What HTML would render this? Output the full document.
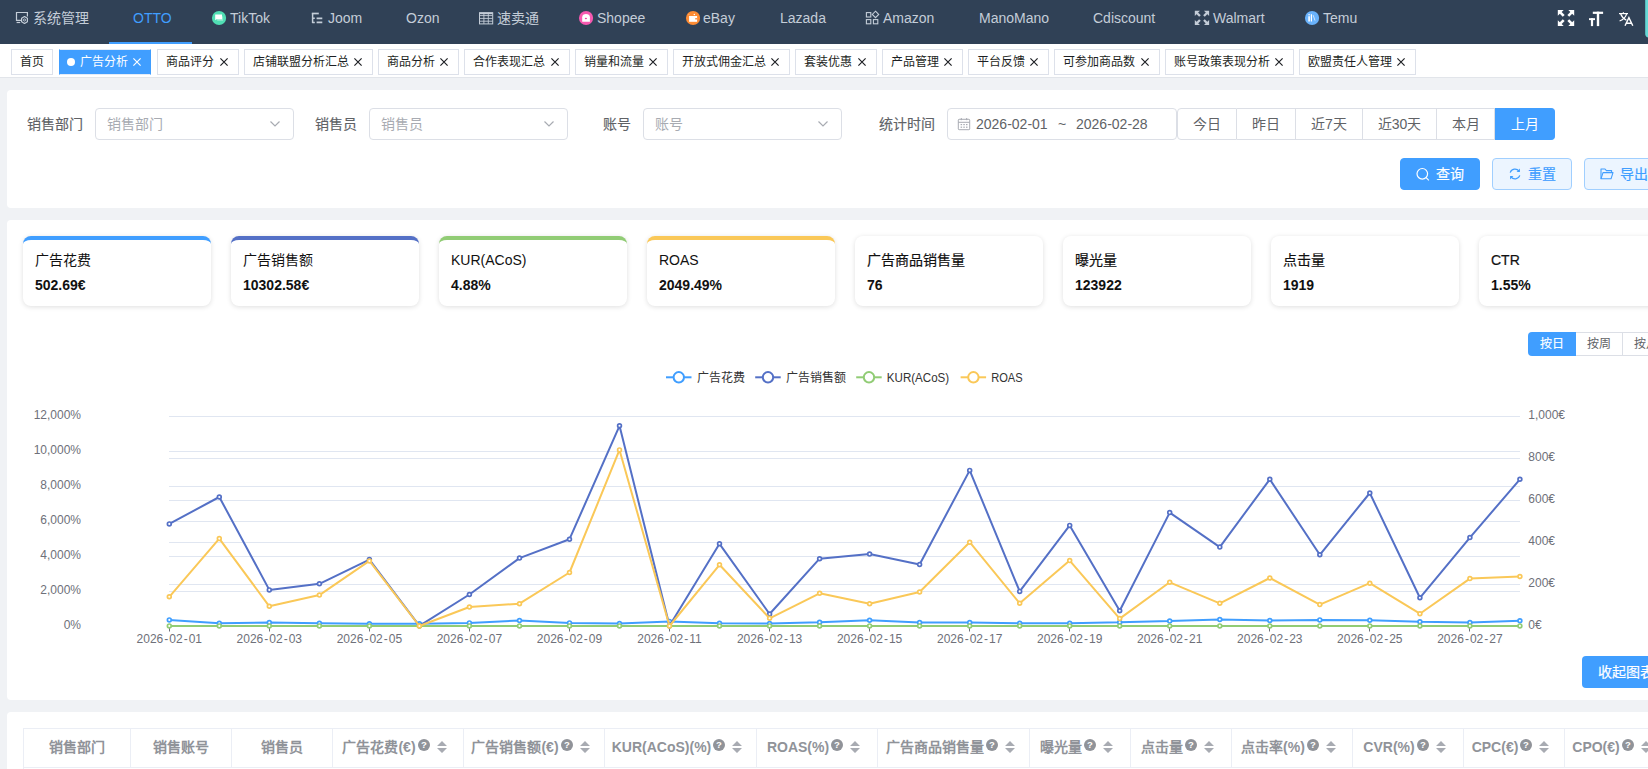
<!DOCTYPE html><html lang="zh-CN"><head><meta charset="utf-8"><title>ad</title><style>
*{box-sizing:border-box;margin:0;padding:0}
html,body{width:1648px;height:769px;overflow:hidden;background:#f0f2f5;font-family:"Liberation Sans",sans-serif;}
body{position:relative;color:#606266;font-size:14px}
.abs{position:absolute}
.nav{position:absolute;left:0;top:0;width:1648px;height:44px;background:#304156}
.nav .t{position:absolute;top:0;height:36px;line-height:36px;font-size:14px;color:#c4cdd8;white-space:nowrap}
.nav .ic{position:absolute}
.tabs{position:absolute;left:0;top:44px;width:1648px;height:34px;background:#fff;border-bottom:1px solid #e2e5ea}
.tag{position:absolute;top:5px;height:26px;line-height:24px;border:1px solid #dde1ea;background:#fff;color:#1d1f23;font-size:12px;padding-left:8px;white-space:nowrap;overflow:hidden}
.tag.act{background:#409eff;border-color:#e4ecf7 #409eff;color:#fff;background-clip:padding-box;padding-left:7px}
.tag .x{position:absolute;right:10px;top:8px;width:8px;height:8px}
.tag.act .x{right:9px}
.panel{position:absolute;left:7px;width:1660px;background:#fff;border-radius:4px}
.lbl{position:absolute;-webkit-text-stroke:0.15px;font-size:14px;color:#606266;height:32px;line-height:32px;white-space:nowrap}
.sel{position:absolute;height:32px;border:1px solid #dcdfe6;border-radius:4px;background:#fff;font-size:14px;color:#a8abb2;line-height:30px;padding-left:11px;white-space:nowrap}
.bg{position:absolute;top:108px;height:32px;border:1px solid #dcdfe6;border-left:none;background:#fff;font-size:14px;color:#606266;line-height:30px;text-align:center;white-space:nowrap}
.btn{position:absolute;height:32px;border-radius:4px;font-size:14px;line-height:30px;white-space:nowrap;-webkit-text-stroke:0.2px}
.card{position:absolute;top:236px;width:188px;height:70px;background:#fff;border-radius:8px;border-top:4px solid transparent;box-shadow:0 1px 5px rgba(0,0,0,.13)}
.card .ct{position:absolute;left:12px;top:10px;font-size:14px;color:#111;line-height:20px;white-space:nowrap}
.card .cv{position:absolute;left:12px;top:35px;font-size:14px;font-weight:bold;color:#111;line-height:20px;white-space:nowrap}
.th{position:absolute;top:729px;height:39px;border-right:1px solid #ebeef5;border-bottom:1px solid #ebeef5;font-size:14px;font-weight:bold;color:#909399;line-height:38px;white-space:nowrap;overflow:hidden;display:flex;align-items:center;justify-content:center}
</style></head><body>
<div class="nav">
<div class="t" style="left:33px;color:#c4cdd8">系统管理</div>
<div class="t" style="left:133px;color:#409eff">OTTO</div>
<div class="t" style="left:230px;color:#c4cdd8">TikTok</div>
<div class="t" style="left:328px;color:#c4cdd8">Joom</div>
<div class="t" style="left:406px;color:#c4cdd8">Ozon</div>
<div class="t" style="left:497px;color:#c4cdd8">速卖通</div>
<div class="t" style="left:597px;color:#c4cdd8">Shopee</div>
<div class="t" style="left:703px;color:#c4cdd8">eBay</div>
<div class="t" style="left:780px;color:#c4cdd8">Lazada</div>
<div class="t" style="left:883px;color:#c4cdd8">Amazon</div>
<div class="t" style="left:979px;color:#c4cdd8">ManoMano</div>
<div class="t" style="left:1093px;color:#c4cdd8">Cdiscount</div>
<div class="t" style="left:1213px;color:#c4cdd8">Walmart</div>
<div class="t" style="left:1323px;color:#c4cdd8">Temu</div>
<div class="abs" style="left:109px;top:42px;width:83px;height:2px;background:#409eff"></div>
<svg class="abs" style="left:0;top:0" width="1648" height="44" viewBox="0 0 1648 44"><g fill="none" stroke="#c4cdd8" stroke-width="1.2"><path d="M21 20.4 H16.5 V12.5 H27.4 V16.6"/><path d="M16.6 22.5 H20.2"/><path d="M24.5 16.6 L27.4 18.3 V21.7 L24.5 23.4 L21.6 21.7 V18.3 Z" fill="#304156" stroke-linejoin="round"/><circle cx="24.5" cy="20" r="1.1" stroke-width="0.9"/></g><circle cx="219.05" cy="18" r="7.1" fill="#50deb4"/><path d="M217.2 16.4 h5.9 v4.5 h-5.9 z" fill="#fff" opacity="0.35"/><path d="M215.2 14.6 h6.8 v4.7 h-5.4 l-1.4 0.9 z" fill="#fff"/><g fill="none" stroke="#c4cdd8" stroke-width="1.7"><path d="M311.8 13.5 H318.8"/><path d="M312.6 13.5 V23.1" stroke-width="1.5"/><path d="M312.5 18.3 H314.8 M312.5 22.4 H314.8" stroke-width="1.5"/><path d="M316.6 18.3 H322.3 M316.6 22.4 H322.3"/></g><g fill="none" stroke="#c4cdd8" stroke-width="1"><rect x="479.5" y="12.7" width="13.2" height="11.2"/><path d="M479.5 15.6 H492.7 M479.5 18.4 H492.7 M479.5 21.2 H492.7 M483.9 12.7 V23.9 M488.3 12.7 V23.9" stroke-width="0.9"/><path d="M479.5 13.4 H492.7" stroke-width="1.6"/></g><circle cx="586.05" cy="18" r="7.1" fill="#f659b0"/><path d="M582.2 21.8 V17.2 C582.2 15.2 583.8 14.1 586 14.1 C588.2 14.1 589.9 15.2 589.9 17.2 V21.8 Z" fill="#fff"/><ellipse cx="585.9" cy="18.6" rx="1.1" ry="0.75" fill="#f03fa3"/><circle cx="693.05" cy="18" r="7.1" fill="#fd8c34"/><rect x="689.1" y="16" width="8" height="5.8" fill="#fff"/><rect x="695.2" y="18" width="1.9" height="1.5" fill="#fd9a4e"/><circle cx="694.3" cy="14.6" r="0.75" fill="#fff"/><circle cx="688.9" cy="14.5" r="0.6" fill="#fff" opacity="0.35"/><g fill="none" stroke="#c4cdd8" stroke-width="1.1"><rect x="866.4" y="12.6" width="4.4" height="4.4"/><rect x="866.4" y="19.6" width="4.4" height="4.2"/><rect x="873.4" y="19.6" width="4.4" height="4.2"/><path d="M875.5 11.2 L878.7 14.4 L875.5 17.6 L872.3 14.4 Z"/></g><path d="M1194.8 10.8 L1199.93 10.8 L1194.8 15.93 Z" fill="#c4cdd8"/><path d="M1196.71 12.71 L1199.93 15.93" stroke="#c4cdd8" stroke-width="2.26" fill="none"/><path d="M1209.1 10.8 L1203.97 10.8 L1209.1 15.93 Z" fill="#c4cdd8"/><path d="M1207.19 12.71 L1203.97 15.93" stroke="#c4cdd8" stroke-width="2.26" fill="none"/><path d="M1194.8 25.1 L1199.93 25.1 L1194.8 19.97 Z" fill="#c4cdd8"/><path d="M1196.71 23.19 L1199.93 19.97" stroke="#c4cdd8" stroke-width="2.26" fill="none"/><path d="M1209.1 25.1 L1203.97 25.1 L1209.1 19.97 Z" fill="#c4cdd8"/><path d="M1207.19 23.19 L1203.97 19.97" stroke="#c4cdd8" stroke-width="2.26" fill="none"/><circle cx="1312.05" cy="18" r="7.1" fill="#69b2fb"/><g stroke="#fff" fill="none"><path d="M1309.1 16.2 V21.5" stroke-width="1.6"/><path d="M1309.1 14.3 V15.3" stroke-width="1.6"/><path d="M1311.4 14.3 V21.5" stroke-width="1.2"/><path d="M1313.2 15.2 L1315 20.6" stroke-width="1" stroke="#cfe6fe"/></g><path d="M1557.8 9.9 L1563.70 9.9 L1557.8 15.80 Z" fill="#fff"/><path d="M1560.00 12.10 L1563.70 15.80" stroke="#fff" stroke-width="2.60" fill="none"/><path d="M1574.2 9.9 L1568.30 9.9 L1574.2 15.80 Z" fill="#fff"/><path d="M1572.00 12.10 L1568.30 15.80" stroke="#fff" stroke-width="2.60" fill="none"/><path d="M1557.8 26.1 L1563.70 26.1 L1557.8 20.20 Z" fill="#fff"/><path d="M1560.00 23.90 L1563.70 20.20" stroke="#fff" stroke-width="2.60" fill="none"/><path d="M1574.2 26.1 L1568.30 26.1 L1574.2 20.20 Z" fill="#fff"/><path d="M1572.00 23.90 L1568.30 20.20" stroke="#fff" stroke-width="2.60" fill="none"/><g fill="#fff"><rect x="1592.8" y="11.7" width="10.3" height="2.2"/><rect x="1596.8" y="11.7" width="2.4" height="14.4"/><rect x="1589" y="18.2" width="6" height="1.9"/><rect x="1590.9" y="18.2" width="2.2" height="7.9"/></g><g fill="none" stroke="#fff" stroke-width="1.2"><path d="M1619 13.6 H1628"/><path d="M1623.4 12.2 V13.6" /><path d="M1626.6 13.8 C1625.8 17 1623 19.6 1619.6 21"/><path d="M1620.6 13.8 C1621.6 16.6 1623.6 18.8 1626.4 20.2"/><path d="M1625 25.8 L1628.9 17.6 L1632.8 25.8 M1626.3 23.2 H1631.5" stroke-width="1.4"/></g><path d="M1648 0 H1645.2 V33.5 a4 4 0 0 0 2.8 4 Z" fill="#66d9d6"/></svg>
</div>
<div class="tabs">
<div class="tag" style="left:11px;width:42px">首页</div>
<div class="tag act" style="left:59px;width:92px"><span style="display:inline-block;width:8px;height:8px;border-radius:50%;background:#fff;margin-right:5px;position:relative;top:0px"></span>广告分析<svg class="x" viewBox="0 0 8 8"><path d="M0.4 0.4 L7.6 7.6 M7.6 0.4 L0.4 7.6" stroke="#fff" stroke-width="1.15" fill="none"/></svg></div>
<div class="tag" style="left:157px;width:82px">商品评分<svg class="x" viewBox="0 0 8 8"><path d="M0.4 0.4 L7.6 7.6 M7.6 0.4 L0.4 7.6" stroke="#1d1f23" stroke-width="1.15" fill="none"/></svg></div>
<div class="tag" style="left:244px;width:129px">店铺联盟分析汇总<svg class="x" viewBox="0 0 8 8"><path d="M0.4 0.4 L7.6 7.6 M7.6 0.4 L0.4 7.6" stroke="#1d1f23" stroke-width="1.15" fill="none"/></svg></div>
<div class="tag" style="left:378px;width:81px">商品分析<svg class="x" viewBox="0 0 8 8"><path d="M0.4 0.4 L7.6 7.6 M7.6 0.4 L0.4 7.6" stroke="#1d1f23" stroke-width="1.15" fill="none"/></svg></div>
<div class="tag" style="left:464px;width:106px">合作表现汇总<svg class="x" viewBox="0 0 8 8"><path d="M0.4 0.4 L7.6 7.6 M7.6 0.4 L0.4 7.6" stroke="#1d1f23" stroke-width="1.15" fill="none"/></svg></div>
<div class="tag" style="left:575px;width:93px">销量和流量<svg class="x" viewBox="0 0 8 8"><path d="M0.4 0.4 L7.6 7.6 M7.6 0.4 L0.4 7.6" stroke="#1d1f23" stroke-width="1.15" fill="none"/></svg></div>
<div class="tag" style="left:673px;width:117px">开放式佣金汇总<svg class="x" viewBox="0 0 8 8"><path d="M0.4 0.4 L7.6 7.6 M7.6 0.4 L0.4 7.6" stroke="#1d1f23" stroke-width="1.15" fill="none"/></svg></div>
<div class="tag" style="left:795px;width:82px">套装优惠<svg class="x" viewBox="0 0 8 8"><path d="M0.4 0.4 L7.6 7.6 M7.6 0.4 L0.4 7.6" stroke="#1d1f23" stroke-width="1.15" fill="none"/></svg></div>
<div class="tag" style="left:882px;width:81px">产品管理<svg class="x" viewBox="0 0 8 8"><path d="M0.4 0.4 L7.6 7.6 M7.6 0.4 L0.4 7.6" stroke="#1d1f23" stroke-width="1.15" fill="none"/></svg></div>
<div class="tag" style="left:968px;width:81px">平台反馈<svg class="x" viewBox="0 0 8 8"><path d="M0.4 0.4 L7.6 7.6 M7.6 0.4 L0.4 7.6" stroke="#1d1f23" stroke-width="1.15" fill="none"/></svg></div>
<div class="tag" style="left:1054px;width:106px">可参加商品数<svg class="x" viewBox="0 0 8 8"><path d="M0.4 0.4 L7.6 7.6 M7.6 0.4 L0.4 7.6" stroke="#1d1f23" stroke-width="1.15" fill="none"/></svg></div>
<div class="tag" style="left:1165px;width:129px">账号政策表现分析<svg class="x" viewBox="0 0 8 8"><path d="M0.4 0.4 L7.6 7.6 M7.6 0.4 L0.4 7.6" stroke="#1d1f23" stroke-width="1.15" fill="none"/></svg></div>
<div class="tag" style="left:1299px;width:117px">欧盟责任人管理<svg class="x" viewBox="0 0 8 8"><path d="M0.4 0.4 L7.6 7.6 M7.6 0.4 L0.4 7.6" stroke="#1d1f23" stroke-width="1.15" fill="none"/></svg></div>
</div>
<div class="panel" style="top:90px;height:118px"></div>
<div class="lbl" style="left:27px;top:108px">销售部门</div>
<div class="sel" style="left:95px;top:108px;width:199px">销售部门</div>
<div class="lbl" style="left:315px;top:108px">销售员</div>
<div class="sel" style="left:369px;top:108px;width:199px">销售员</div>
<div class="lbl" style="left:603px;top:108px">账号</div>
<div class="sel" style="left:643px;top:108px;width:199px">账号</div>
<svg class="abs" style="left:269px;top:119px" width="12" height="10" viewBox="0 0 12 10"><path d="M1.5 2.5 L6 7 L10.5 2.5" stroke="#a8abb2" stroke-width="1.2" fill="none"/></svg>
<svg class="abs" style="left:543px;top:119px" width="12" height="10" viewBox="0 0 12 10"><path d="M1.5 2.5 L6 7 L10.5 2.5" stroke="#a8abb2" stroke-width="1.2" fill="none"/></svg>
<svg class="abs" style="left:817px;top:119px" width="12" height="10" viewBox="0 0 12 10"><path d="M1.5 2.5 L6 7 L10.5 2.5" stroke="#a8abb2" stroke-width="1.2" fill="none"/></svg>
<div class="lbl" style="left:879px;top:108px">统计时间</div>
<div class="sel" style="left:947px;top:108px;width:230px;color:#606266;padding-left:0"><span class="abs" style="left:28px">2026-02-01</span><span class="abs" style="left:110px">~</span><span class="abs" style="left:128px">2026-02-28</span></div>
<svg class="abs" style="left:957px;top:117px" width="14" height="14" viewBox="0 0 14 14"><g fill="none" stroke="#a8abb2" stroke-width="1"><rect x="1.3" y="2.3" width="11.4" height="10.4" rx="0.8"/><path d="M1.3 5.3 H12.7"/><path d="M4.3 1 V3.2 M9.7 1 V3.2"/></g><g fill="#a8abb2"><rect x="3.6" y="7" width="1.5" height="1.2"/><rect x="6.3" y="7" width="1.5" height="1.2"/><rect x="9" y="7" width="1.5" height="1.2"/><rect x="3.6" y="9.6" width="1.5" height="1.2"/><rect x="6.3" y="9.6" width="1.5" height="1.2"/><rect x="9" y="9.6" width="1.5" height="1.2"/></g></svg>
<div class="bg" style="left:1177px;width:60px;border-left:1px solid #dcdfe6;border-radius:4px 0 0 4px">今日</div>
<div class="bg" style="left:1237px;width:59px">昨日</div>
<div class="bg" style="left:1296px;width:67px">近7天</div>
<div class="bg" style="left:1363px;width:74px">近30天</div>
<div class="bg" style="left:1437px;width:58px">本月</div>
<div class="bg" style="left:1495px;width:60px;background:#409eff;border-color:#409eff;color:#fff;border-radius:0 4px 4px 0">上月</div>
<div class="btn" style="left:1400px;top:158px;width:80px;background:#409eff;border:1px solid #409eff;color:#fff"><span class="abs" style="left:35px">查询</span></div>
<div class="btn" style="left:1492px;top:158px;width:80px;background:#ecf5ff;border:1px solid #a0cfff;color:#409eff"><span class="abs" style="left:35px">重置</span></div>
<div class="btn" style="left:1584px;top:158px;width:80px;background:#ecf5ff;border:1px solid #a0cfff;color:#409eff"><span class="abs" style="left:35px">导出</span></div>
<svg class="abs" style="left:1414px;top:166px" width="18" height="18" viewBox="0 0 18 18"><circle cx="8.3" cy="7.8" r="5.3" fill="none" stroke="#fff" stroke-width="1.2"/><path d="M12.2 11.7 L14.8 14.3" stroke="#fff" stroke-width="1.2" fill="none"/></svg><svg class="abs" style="left:1507px;top:166px" width="16" height="16" viewBox="0 0 16 16"><g fill="none" stroke="#409eff" stroke-width="1.2"><path d="M3.2 6.6 A5 5 0 0 1 12 5.2"/><path d="M12.8 9.4 A5 5 0 0 1 4 10.8"/></g><path d="M12.9 2.6 V5.9 H9.6 Z M3.1 13.4 V10.1 H6.4 Z" fill="#409eff"/></svg><svg class="abs" style="left:1600px;top:167px" width="14" height="14" viewBox="0 0 14 14"><g fill="none" stroke="#409eff" stroke-width="1.1" stroke-linejoin="round"><path d="M1 11.8 V2 H5 L6.4 3.6 H11.6 V5.6"/><path d="M1 11.8 L3 5.6 H13 L11 11.8 Z"/></g></svg>
<div class="panel" style="top:220px;height:480px"></div>
<div class="card" style="left:23px;border-top-color:#409eff"><div class="ct" style="">广告花费</div><div class="cv">502.69€</div></div>
<div class="card" style="left:231px;border-top-color:#5470c6"><div class="ct" style="">广告销售额</div><div class="cv">10302.58€</div></div>
<div class="card" style="left:439px;border-top-color:#91cc75"><div class="ct" style="">KUR(ACoS)</div><div class="cv">4.88%</div></div>
<div class="card" style="left:647px;border-top-color:#fac858"><div class="ct" style="">ROAS</div><div class="cv">2049.49%</div></div>
<div class="card" style="left:855px"><div class="ct" style="-webkit-text-stroke:0.2px">广告商品销售量</div><div class="cv">76</div></div>
<div class="card" style="left:1063px"><div class="ct" style="-webkit-text-stroke:0.2px">曝光量</div><div class="cv">123922</div></div>
<div class="card" style="left:1271px"><div class="ct" style="-webkit-text-stroke:0.2px">点击量</div><div class="cv">1919</div></div>
<div class="card" style="left:1479px"><div class="ct" style="-webkit-text-stroke:0.2px">CTR</div><div class="cv">1.55%</div></div>
<div class="abs" style="left:1528px;top:332px;width:48px;height:24px;background:#409eff;color:#fff;font-size:12px;line-height:24px;text-align:center;border-radius:4px 0 0 4px;-webkit-text-stroke:0.15px">按日</div>
<div class="abs" style="left:1576px;top:332px;width:47px;height:24px;background:#fff;border:1px solid #dcdfe6;border-left:none;color:#606266;font-size:12px;line-height:22px;text-align:center">按周</div>
<div class="abs" style="left:1623px;top:332px;width:47px;height:24px;background:#fff;border:1px solid #dcdfe6;border-left:none;color:#606266;font-size:12px;line-height:22px;padding-left:11px;white-space:nowrap">按月</div>
<svg class="abs" style="left:0;top:0" width="1648" height="769" viewBox="0 0 1648 769"><line x1="169" x2="1520" y1="416.5" y2="416.5" stroke="#e0e6f1" stroke-width="1"/><line x1="169" x2="1520" y1="451.5" y2="451.5" stroke="#e0e6f1" stroke-width="1"/><line x1="169" x2="1520" y1="486.5" y2="486.5" stroke="#e0e6f1" stroke-width="1"/><line x1="169" x2="1520" y1="521.5" y2="521.5" stroke="#e0e6f1" stroke-width="1"/><line x1="169" x2="1520" y1="556.5" y2="556.5" stroke="#e0e6f1" stroke-width="1"/><line x1="169" x2="1520" y1="591.5" y2="591.5" stroke="#e0e6f1" stroke-width="1"/><line x1="169" x2="1520" y1="458.5" y2="458.5" stroke="#e0e6f1" stroke-width="1"/><line x1="169" x2="1520" y1="500.5" y2="500.5" stroke="#e0e6f1" stroke-width="1"/><line x1="169" x2="1520" y1="542.5" y2="542.5" stroke="#e0e6f1" stroke-width="1"/><line x1="169" x2="1520" y1="584.5" y2="584.5" stroke="#e0e6f1" stroke-width="1"/><line x1="169" x2="1520" y1="626.5" y2="626.5" stroke="#6e7079" stroke-width="1"/><line x1="169.5" x2="169.5" y1="626" y2="631.5" stroke="#6e7079" stroke-width="1"/><line x1="269.5" x2="269.5" y1="626" y2="631.5" stroke="#6e7079" stroke-width="1"/><line x1="369.5" x2="369.5" y1="626" y2="631.5" stroke="#6e7079" stroke-width="1"/><line x1="469.5" x2="469.5" y1="626" y2="631.5" stroke="#6e7079" stroke-width="1"/><line x1="569.5" x2="569.5" y1="626" y2="631.5" stroke="#6e7079" stroke-width="1"/><line x1="669.5" x2="669.5" y1="626" y2="631.5" stroke="#6e7079" stroke-width="1"/><line x1="769.5" x2="769.5" y1="626" y2="631.5" stroke="#6e7079" stroke-width="1"/><line x1="869.5" x2="869.5" y1="626" y2="631.5" stroke="#6e7079" stroke-width="1"/><line x1="969.5" x2="969.5" y1="626" y2="631.5" stroke="#6e7079" stroke-width="1"/><line x1="1069.5" x2="1069.5" y1="626" y2="631.5" stroke="#6e7079" stroke-width="1"/><line x1="1169.5" x2="1169.5" y1="626" y2="631.5" stroke="#6e7079" stroke-width="1"/><line x1="1269.5" x2="1269.5" y1="626" y2="631.5" stroke="#6e7079" stroke-width="1"/><line x1="1369.5" x2="1369.5" y1="626" y2="631.5" stroke="#6e7079" stroke-width="1"/><line x1="1469.5" x2="1469.5" y1="626" y2="631.5" stroke="#6e7079" stroke-width="1"/><polyline points="169.3,619.9 219.3,623.2 269.3,622.6 319.4,623.2 369.4,623.8 419.4,623.8 469.4,622.9 519.5,620.5 569.5,622.9 619.5,623.5 669.5,621.4 719.5,623.2 769.6,623.5 819.6,622.3 869.6,620.2 919.6,622.6 969.7,622.6 1019.7,623.2 1069.7,623.2 1119.7,622.3 1169.7,621.1 1219.8,619.5 1269.8,620.5 1319.8,619.9 1369.8,620.2 1419.9,621.7 1469.9,622.6 1519.9,620.8" fill="none" stroke="#409eff" stroke-width="2" stroke-linejoin="bevel"/><circle cx="169.3" cy="619.9" r="1.9" fill="#fff" stroke="#409eff" stroke-width="1.7"/><circle cx="219.3" cy="623.2" r="1.9" fill="#fff" stroke="#409eff" stroke-width="1.7"/><circle cx="269.3" cy="622.6" r="1.9" fill="#fff" stroke="#409eff" stroke-width="1.7"/><circle cx="319.4" cy="623.2" r="1.9" fill="#fff" stroke="#409eff" stroke-width="1.7"/><circle cx="369.4" cy="623.8" r="1.9" fill="#fff" stroke="#409eff" stroke-width="1.7"/><circle cx="419.4" cy="623.8" r="1.9" fill="#fff" stroke="#409eff" stroke-width="1.7"/><circle cx="469.4" cy="622.9" r="1.9" fill="#fff" stroke="#409eff" stroke-width="1.7"/><circle cx="519.5" cy="620.5" r="1.9" fill="#fff" stroke="#409eff" stroke-width="1.7"/><circle cx="569.5" cy="622.9" r="1.9" fill="#fff" stroke="#409eff" stroke-width="1.7"/><circle cx="619.5" cy="623.5" r="1.9" fill="#fff" stroke="#409eff" stroke-width="1.7"/><circle cx="669.5" cy="621.4" r="1.9" fill="#fff" stroke="#409eff" stroke-width="1.7"/><circle cx="719.5" cy="623.2" r="1.9" fill="#fff" stroke="#409eff" stroke-width="1.7"/><circle cx="769.6" cy="623.5" r="1.9" fill="#fff" stroke="#409eff" stroke-width="1.7"/><circle cx="819.6" cy="622.3" r="1.9" fill="#fff" stroke="#409eff" stroke-width="1.7"/><circle cx="869.6" cy="620.2" r="1.9" fill="#fff" stroke="#409eff" stroke-width="1.7"/><circle cx="919.6" cy="622.6" r="1.9" fill="#fff" stroke="#409eff" stroke-width="1.7"/><circle cx="969.7" cy="622.6" r="1.9" fill="#fff" stroke="#409eff" stroke-width="1.7"/><circle cx="1019.7" cy="623.2" r="1.9" fill="#fff" stroke="#409eff" stroke-width="1.7"/><circle cx="1069.7" cy="623.2" r="1.9" fill="#fff" stroke="#409eff" stroke-width="1.7"/><circle cx="1119.7" cy="622.3" r="1.9" fill="#fff" stroke="#409eff" stroke-width="1.7"/><circle cx="1169.7" cy="621.1" r="1.9" fill="#fff" stroke="#409eff" stroke-width="1.7"/><circle cx="1219.8" cy="619.5" r="1.9" fill="#fff" stroke="#409eff" stroke-width="1.7"/><circle cx="1269.8" cy="620.5" r="1.9" fill="#fff" stroke="#409eff" stroke-width="1.7"/><circle cx="1319.8" cy="619.9" r="1.9" fill="#fff" stroke="#409eff" stroke-width="1.7"/><circle cx="1369.8" cy="620.2" r="1.9" fill="#fff" stroke="#409eff" stroke-width="1.7"/><circle cx="1419.9" cy="621.7" r="1.9" fill="#fff" stroke="#409eff" stroke-width="1.7"/><circle cx="1469.9" cy="622.6" r="1.9" fill="#fff" stroke="#409eff" stroke-width="1.7"/><circle cx="1519.9" cy="620.8" r="1.9" fill="#fff" stroke="#409eff" stroke-width="1.7"/><polyline points="169.3,523.9 219.3,497.0 269.3,589.9 319.4,583.8 369.4,559.6 419.4,625.8 469.4,594.5 519.5,558.1 569.5,539.2 619.5,425.8 669.5,625.8 719.5,543.8 769.6,614.0 819.6,558.7 869.6,554.1 919.6,564.5 969.7,470.4 1019.7,591.4 1069.7,525.4 1119.7,610.7 1169.7,512.6 1219.8,547.1 1269.8,479.3 1319.8,554.8 1369.8,493.0 1419.9,597.8 1469.9,537.6 1519.9,479.3" fill="none" stroke="#5470c6" stroke-width="2" stroke-linejoin="bevel"/><circle cx="169.3" cy="523.9" r="1.9" fill="#fff" stroke="#5470c6" stroke-width="1.7"/><circle cx="219.3" cy="497.0" r="1.9" fill="#fff" stroke="#5470c6" stroke-width="1.7"/><circle cx="269.3" cy="589.9" r="1.9" fill="#fff" stroke="#5470c6" stroke-width="1.7"/><circle cx="319.4" cy="583.8" r="1.9" fill="#fff" stroke="#5470c6" stroke-width="1.7"/><circle cx="369.4" cy="559.6" r="1.9" fill="#fff" stroke="#5470c6" stroke-width="1.7"/><circle cx="419.4" cy="625.8" r="1.9" fill="#fff" stroke="#5470c6" stroke-width="1.7"/><circle cx="469.4" cy="594.5" r="1.9" fill="#fff" stroke="#5470c6" stroke-width="1.7"/><circle cx="519.5" cy="558.1" r="1.9" fill="#fff" stroke="#5470c6" stroke-width="1.7"/><circle cx="569.5" cy="539.2" r="1.9" fill="#fff" stroke="#5470c6" stroke-width="1.7"/><circle cx="619.5" cy="425.8" r="1.9" fill="#fff" stroke="#5470c6" stroke-width="1.7"/><circle cx="669.5" cy="625.8" r="1.9" fill="#fff" stroke="#5470c6" stroke-width="1.7"/><circle cx="719.5" cy="543.8" r="1.9" fill="#fff" stroke="#5470c6" stroke-width="1.7"/><circle cx="769.6" cy="614.0" r="1.9" fill="#fff" stroke="#5470c6" stroke-width="1.7"/><circle cx="819.6" cy="558.7" r="1.9" fill="#fff" stroke="#5470c6" stroke-width="1.7"/><circle cx="869.6" cy="554.1" r="1.9" fill="#fff" stroke="#5470c6" stroke-width="1.7"/><circle cx="919.6" cy="564.5" r="1.9" fill="#fff" stroke="#5470c6" stroke-width="1.7"/><circle cx="969.7" cy="470.4" r="1.9" fill="#fff" stroke="#5470c6" stroke-width="1.7"/><circle cx="1019.7" cy="591.4" r="1.9" fill="#fff" stroke="#5470c6" stroke-width="1.7"/><circle cx="1069.7" cy="525.4" r="1.9" fill="#fff" stroke="#5470c6" stroke-width="1.7"/><circle cx="1119.7" cy="610.7" r="1.9" fill="#fff" stroke="#5470c6" stroke-width="1.7"/><circle cx="1169.7" cy="512.6" r="1.9" fill="#fff" stroke="#5470c6" stroke-width="1.7"/><circle cx="1219.8" cy="547.1" r="1.9" fill="#fff" stroke="#5470c6" stroke-width="1.7"/><circle cx="1269.8" cy="479.3" r="1.9" fill="#fff" stroke="#5470c6" stroke-width="1.7"/><circle cx="1319.8" cy="554.8" r="1.9" fill="#fff" stroke="#5470c6" stroke-width="1.7"/><circle cx="1369.8" cy="493.0" r="1.9" fill="#fff" stroke="#5470c6" stroke-width="1.7"/><circle cx="1419.9" cy="597.8" r="1.9" fill="#fff" stroke="#5470c6" stroke-width="1.7"/><circle cx="1469.9" cy="537.6" r="1.9" fill="#fff" stroke="#5470c6" stroke-width="1.7"/><circle cx="1519.9" cy="479.3" r="1.9" fill="#fff" stroke="#5470c6" stroke-width="1.7"/><polyline points="169.3,625.9 219.3,625.9 269.3,625.9 319.4,625.9 369.4,625.9 419.4,625.9 469.4,625.9 519.5,625.9 569.5,625.9 619.5,625.9 669.5,625.9 719.5,625.9 769.6,625.9 819.6,625.9 869.6,625.9 919.6,625.9 969.7,625.9 1019.7,625.9 1069.7,625.9 1119.7,625.9 1169.7,625.9 1219.8,625.9 1269.8,625.9 1319.8,625.9 1369.8,625.9 1419.9,625.9 1469.9,625.9 1519.9,625.9" fill="none" stroke="#91cc75" stroke-width="2" stroke-linejoin="bevel"/><circle cx="169.3" cy="625.9" r="1.9" fill="#fff" stroke="#91cc75" stroke-width="1.7"/><circle cx="219.3" cy="625.9" r="1.9" fill="#fff" stroke="#91cc75" stroke-width="1.7"/><circle cx="269.3" cy="625.9" r="1.9" fill="#fff" stroke="#91cc75" stroke-width="1.7"/><circle cx="319.4" cy="625.9" r="1.9" fill="#fff" stroke="#91cc75" stroke-width="1.7"/><circle cx="369.4" cy="625.9" r="1.9" fill="#fff" stroke="#91cc75" stroke-width="1.7"/><circle cx="419.4" cy="625.9" r="1.9" fill="#fff" stroke="#91cc75" stroke-width="1.7"/><circle cx="469.4" cy="625.9" r="1.9" fill="#fff" stroke="#91cc75" stroke-width="1.7"/><circle cx="519.5" cy="625.9" r="1.9" fill="#fff" stroke="#91cc75" stroke-width="1.7"/><circle cx="569.5" cy="625.9" r="1.9" fill="#fff" stroke="#91cc75" stroke-width="1.7"/><circle cx="619.5" cy="625.9" r="1.9" fill="#fff" stroke="#91cc75" stroke-width="1.7"/><circle cx="669.5" cy="625.9" r="1.9" fill="#fff" stroke="#91cc75" stroke-width="1.7"/><circle cx="719.5" cy="625.9" r="1.9" fill="#fff" stroke="#91cc75" stroke-width="1.7"/><circle cx="769.6" cy="625.9" r="1.9" fill="#fff" stroke="#91cc75" stroke-width="1.7"/><circle cx="819.6" cy="625.9" r="1.9" fill="#fff" stroke="#91cc75" stroke-width="1.7"/><circle cx="869.6" cy="625.9" r="1.9" fill="#fff" stroke="#91cc75" stroke-width="1.7"/><circle cx="919.6" cy="625.9" r="1.9" fill="#fff" stroke="#91cc75" stroke-width="1.7"/><circle cx="969.7" cy="625.9" r="1.9" fill="#fff" stroke="#91cc75" stroke-width="1.7"/><circle cx="1019.7" cy="625.9" r="1.9" fill="#fff" stroke="#91cc75" stroke-width="1.7"/><circle cx="1069.7" cy="625.9" r="1.9" fill="#fff" stroke="#91cc75" stroke-width="1.7"/><circle cx="1119.7" cy="625.9" r="1.9" fill="#fff" stroke="#91cc75" stroke-width="1.7"/><circle cx="1169.7" cy="625.9" r="1.9" fill="#fff" stroke="#91cc75" stroke-width="1.7"/><circle cx="1219.8" cy="625.9" r="1.9" fill="#fff" stroke="#91cc75" stroke-width="1.7"/><circle cx="1269.8" cy="625.9" r="1.9" fill="#fff" stroke="#91cc75" stroke-width="1.7"/><circle cx="1319.8" cy="625.9" r="1.9" fill="#fff" stroke="#91cc75" stroke-width="1.7"/><circle cx="1369.8" cy="625.9" r="1.9" fill="#fff" stroke="#91cc75" stroke-width="1.7"/><circle cx="1419.9" cy="625.9" r="1.9" fill="#fff" stroke="#91cc75" stroke-width="1.7"/><circle cx="1469.9" cy="625.9" r="1.9" fill="#fff" stroke="#91cc75" stroke-width="1.7"/><circle cx="1519.9" cy="625.9" r="1.9" fill="#fff" stroke="#91cc75" stroke-width="1.7"/><polyline points="169.3,596.8 219.3,538.6 269.3,606.3 319.4,595.1 369.4,560.9 419.4,626.0 469.4,607.0 519.5,603.7 569.5,572.5 619.5,449.9 669.5,626.0 719.5,564.8 769.6,618.3 819.6,593.3 869.6,603.7 919.6,592.0 969.7,542.2 1019.7,603.3 1069.7,560.6 1119.7,618.6 1169.7,582.3 1219.8,603.3 1269.8,578.0 1319.8,604.6 1369.8,583.2 1419.9,613.7 1469.9,578.6 1519.9,576.5" fill="none" stroke="#fac858" stroke-width="2" stroke-linejoin="bevel"/><circle cx="169.3" cy="596.8" r="1.9" fill="#fff" stroke="#fac858" stroke-width="1.7"/><circle cx="219.3" cy="538.6" r="1.9" fill="#fff" stroke="#fac858" stroke-width="1.7"/><circle cx="269.3" cy="606.3" r="1.9" fill="#fff" stroke="#fac858" stroke-width="1.7"/><circle cx="319.4" cy="595.1" r="1.9" fill="#fff" stroke="#fac858" stroke-width="1.7"/><circle cx="369.4" cy="560.9" r="1.9" fill="#fff" stroke="#fac858" stroke-width="1.7"/><circle cx="419.4" cy="626.0" r="1.9" fill="#fff" stroke="#fac858" stroke-width="1.7"/><circle cx="469.4" cy="607.0" r="1.9" fill="#fff" stroke="#fac858" stroke-width="1.7"/><circle cx="519.5" cy="603.7" r="1.9" fill="#fff" stroke="#fac858" stroke-width="1.7"/><circle cx="569.5" cy="572.5" r="1.9" fill="#fff" stroke="#fac858" stroke-width="1.7"/><circle cx="619.5" cy="449.9" r="1.9" fill="#fff" stroke="#fac858" stroke-width="1.7"/><circle cx="669.5" cy="626.0" r="1.9" fill="#fff" stroke="#fac858" stroke-width="1.7"/><circle cx="719.5" cy="564.8" r="1.9" fill="#fff" stroke="#fac858" stroke-width="1.7"/><circle cx="769.6" cy="618.3" r="1.9" fill="#fff" stroke="#fac858" stroke-width="1.7"/><circle cx="819.6" cy="593.3" r="1.9" fill="#fff" stroke="#fac858" stroke-width="1.7"/><circle cx="869.6" cy="603.7" r="1.9" fill="#fff" stroke="#fac858" stroke-width="1.7"/><circle cx="919.6" cy="592.0" r="1.9" fill="#fff" stroke="#fac858" stroke-width="1.7"/><circle cx="969.7" cy="542.2" r="1.9" fill="#fff" stroke="#fac858" stroke-width="1.7"/><circle cx="1019.7" cy="603.3" r="1.9" fill="#fff" stroke="#fac858" stroke-width="1.7"/><circle cx="1069.7" cy="560.6" r="1.9" fill="#fff" stroke="#fac858" stroke-width="1.7"/><circle cx="1119.7" cy="618.6" r="1.9" fill="#fff" stroke="#fac858" stroke-width="1.7"/><circle cx="1169.7" cy="582.3" r="1.9" fill="#fff" stroke="#fac858" stroke-width="1.7"/><circle cx="1219.8" cy="603.3" r="1.9" fill="#fff" stroke="#fac858" stroke-width="1.7"/><circle cx="1269.8" cy="578.0" r="1.9" fill="#fff" stroke="#fac858" stroke-width="1.7"/><circle cx="1319.8" cy="604.6" r="1.9" fill="#fff" stroke="#fac858" stroke-width="1.7"/><circle cx="1369.8" cy="583.2" r="1.9" fill="#fff" stroke="#fac858" stroke-width="1.7"/><circle cx="1419.9" cy="613.7" r="1.9" fill="#fff" stroke="#fac858" stroke-width="1.7"/><circle cx="1469.9" cy="578.6" r="1.9" fill="#fff" stroke="#fac858" stroke-width="1.7"/><circle cx="1519.9" cy="576.5" r="1.9" fill="#fff" stroke="#fac858" stroke-width="1.7"/><g font-family='"Liberation Sans", sans-serif' font-size="12" fill="#6e7079"><text x="81" y="418.9" text-anchor="end">12,000%</text><text x="81" y="453.9" text-anchor="end">10,000%</text><text x="81" y="488.9" text-anchor="end">8,000%</text><text x="81" y="523.9" text-anchor="end">6,000%</text><text x="81" y="558.9" text-anchor="end">4,000%</text><text x="81" y="593.9" text-anchor="end">2,000%</text><text x="81" y="628.9" text-anchor="end">0%</text><text x="1528.3" y="418.9">1,000€</text><text x="1528.3" y="460.9">800€</text><text x="1528.3" y="502.9">600€</text><text x="1528.3" y="544.9">400€</text><text x="1528.3" y="586.9">200€</text><text x="1528.3" y="628.9">0€</text><text x="169.3" y="643" text-anchor="middle">2026<tspan dx="1">-</tspan><tspan dx="1">02</tspan><tspan dx="1">-</tspan><tspan dx="1">01</tspan></text><text x="269.3" y="643" text-anchor="middle">2026<tspan dx="1">-</tspan><tspan dx="1">02</tspan><tspan dx="1">-</tspan><tspan dx="1">03</tspan></text><text x="369.4" y="643" text-anchor="middle">2026<tspan dx="1">-</tspan><tspan dx="1">02</tspan><tspan dx="1">-</tspan><tspan dx="1">05</tspan></text><text x="469.4" y="643" text-anchor="middle">2026<tspan dx="1">-</tspan><tspan dx="1">02</tspan><tspan dx="1">-</tspan><tspan dx="1">07</tspan></text><text x="569.5" y="643" text-anchor="middle">2026<tspan dx="1">-</tspan><tspan dx="1">02</tspan><tspan dx="1">-</tspan><tspan dx="1">09</tspan></text><text x="669.5" y="643" text-anchor="middle">2026<tspan dx="1">-</tspan><tspan dx="1">02</tspan><tspan dx="1">-</tspan><tspan dx="1">11</tspan></text><text x="769.6" y="643" text-anchor="middle">2026<tspan dx="1">-</tspan><tspan dx="1">02</tspan><tspan dx="1">-</tspan><tspan dx="1">13</tspan></text><text x="869.6" y="643" text-anchor="middle">2026<tspan dx="1">-</tspan><tspan dx="1">02</tspan><tspan dx="1">-</tspan><tspan dx="1">15</tspan></text><text x="969.7" y="643" text-anchor="middle">2026<tspan dx="1">-</tspan><tspan dx="1">02</tspan><tspan dx="1">-</tspan><tspan dx="1">17</tspan></text><text x="1069.7" y="643" text-anchor="middle">2026<tspan dx="1">-</tspan><tspan dx="1">02</tspan><tspan dx="1">-</tspan><tspan dx="1">19</tspan></text><text x="1169.7" y="643" text-anchor="middle">2026<tspan dx="1">-</tspan><tspan dx="1">02</tspan><tspan dx="1">-</tspan><tspan dx="1">21</tspan></text><text x="1269.8" y="643" text-anchor="middle">2026<tspan dx="1">-</tspan><tspan dx="1">02</tspan><tspan dx="1">-</tspan><tspan dx="1">23</tspan></text><text x="1369.8" y="643" text-anchor="middle">2026<tspan dx="1">-</tspan><tspan dx="1">02</tspan><tspan dx="1">-</tspan><tspan dx="1">25</tspan></text><text x="1469.9" y="643" text-anchor="middle">2026<tspan dx="1">-</tspan><tspan dx="1">02</tspan><tspan dx="1">-</tspan><tspan dx="1">27</tspan></text></g><g font-family='"Liberation Sans", sans-serif' font-size="12" fill="#333"><line x1="666" x2="691.5" y1="377.3" y2="377.3" stroke="#409eff" stroke-width="2"/><circle cx="678.8" cy="377.3" r="5.2" fill="#fff" stroke="#409eff" stroke-width="2"/><text x="696.6" y="381.5">广告花费</text><line x1="755.2" x2="780.7" y1="377.3" y2="377.3" stroke="#5470c6" stroke-width="2"/><circle cx="768.0" cy="377.3" r="5.2" fill="#fff" stroke="#5470c6" stroke-width="2"/><text x="785.8000000000001" y="381.5">广告销售额</text><line x1="856.2" x2="881.7" y1="377.3" y2="377.3" stroke="#91cc75" stroke-width="2"/><circle cx="869.0" cy="377.3" r="5.2" fill="#fff" stroke="#91cc75" stroke-width="2"/><text x="886.8000000000001" y="381.5" textLength="62.4" lengthAdjust="spacingAndGlyphs">KUR(ACoS)</text><line x1="960.6" x2="986.1" y1="377.3" y2="377.3" stroke="#fac858" stroke-width="2"/><circle cx="973.4" cy="377.3" r="5.2" fill="#fff" stroke="#fac858" stroke-width="2"/><text x="991.2" y="381.5" textLength="31.5" lengthAdjust="spacingAndGlyphs">ROAS</text></g></svg>
<div class="btn" style="left:1582px;top:656px;width:90px;background:#409eff;color:#fff;line-height:32px;padding-left:16px">收起图表</div>
<div class="panel" style="top:712px;height:80px"></div>
<div class="abs" style="left:23px;top:728px;width:1640px;height:1px;background:#ebeef5"></div>
<div class="abs" style="left:23px;top:728px;width:1px;height:41px;background:#ebeef5"></div>
<div class="th" style="left:24px;width:107px"><span style="position:relative;top:-1px">销售部门</span></div>
<div class="th" style="left:131px;width:101px"><span style="position:relative;top:-1px">销售账号</span></div>
<div class="th" style="left:232px;width:101px"><span style="position:relative;top:-1px">销售员</span></div>
<div class="th" style="left:333px;width:131px"><span style="position:relative;top:-1px">广告花费(€)</span><svg style="position:relative;top:-3px;margin-left:2px;flex:none" width="12" height="12" viewBox="0 0 12 12"><circle cx="6" cy="6" r="6" fill="#909399"/><text x="6" y="9.4" font-size="9.5" fill="#fff" text-anchor="middle" font-family='"Liberation Sans", sans-serif'>?</text></svg><svg style="position:relative;top:-1px;flex:none" width="24" height="14" viewBox="0 0 24 14"><path d="M12 1 L17 6 L7 6 Z M12 13 L17 8 L7 8 Z" fill="#a8abb2"/></svg></div>
<div class="th" style="left:464px;width:141px"><span style="position:relative;top:-1px">广告销售额(€)</span><svg style="position:relative;top:-3px;margin-left:2px;flex:none" width="12" height="12" viewBox="0 0 12 12"><circle cx="6" cy="6" r="6" fill="#909399"/><text x="6" y="9.4" font-size="9.5" fill="#fff" text-anchor="middle" font-family='"Liberation Sans", sans-serif'>?</text></svg><svg style="position:relative;top:-1px;flex:none" width="24" height="14" viewBox="0 0 24 14"><path d="M12 1 L17 6 L7 6 Z M12 13 L17 8 L7 8 Z" fill="#a8abb2"/></svg></div>
<div class="th" style="left:605px;width:152px"><span style="position:relative;top:-1px">KUR(ACoS)(%)</span><svg style="position:relative;top:-3px;margin-left:2px;flex:none" width="12" height="12" viewBox="0 0 12 12"><circle cx="6" cy="6" r="6" fill="#909399"/><text x="6" y="9.4" font-size="9.5" fill="#fff" text-anchor="middle" font-family='"Liberation Sans", sans-serif'>?</text></svg><svg style="position:relative;top:-1px;flex:none" width="24" height="14" viewBox="0 0 24 14"><path d="M12 1 L17 6 L7 6 Z M12 13 L17 8 L7 8 Z" fill="#a8abb2"/></svg></div>
<div class="th" style="left:757px;width:121px"><span style="position:relative;top:-1px">ROAS(%)</span><svg style="position:relative;top:-3px;margin-left:2px;flex:none" width="12" height="12" viewBox="0 0 12 12"><circle cx="6" cy="6" r="6" fill="#909399"/><text x="6" y="9.4" font-size="9.5" fill="#fff" text-anchor="middle" font-family='"Liberation Sans", sans-serif'>?</text></svg><svg style="position:relative;top:-1px;flex:none" width="24" height="14" viewBox="0 0 24 14"><path d="M12 1 L17 6 L7 6 Z M12 13 L17 8 L7 8 Z" fill="#a8abb2"/></svg></div>
<div class="th" style="left:878px;width:152px"><span style="position:relative;top:-1px">广告商品销售量</span><svg style="position:relative;top:-3px;margin-left:2px;flex:none" width="12" height="12" viewBox="0 0 12 12"><circle cx="6" cy="6" r="6" fill="#909399"/><text x="6" y="9.4" font-size="9.5" fill="#fff" text-anchor="middle" font-family='"Liberation Sans", sans-serif'>?</text></svg><svg style="position:relative;top:-1px;flex:none" width="24" height="14" viewBox="0 0 24 14"><path d="M12 1 L17 6 L7 6 Z M12 13 L17 8 L7 8 Z" fill="#a8abb2"/></svg></div>
<div class="th" style="left:1030px;width:101px"><span style="position:relative;top:-1px">曝光量</span><svg style="position:relative;top:-3px;margin-left:2px;flex:none" width="12" height="12" viewBox="0 0 12 12"><circle cx="6" cy="6" r="6" fill="#909399"/><text x="6" y="9.4" font-size="9.5" fill="#fff" text-anchor="middle" font-family='"Liberation Sans", sans-serif'>?</text></svg><svg style="position:relative;top:-1px;flex:none" width="24" height="14" viewBox="0 0 24 14"><path d="M12 1 L17 6 L7 6 Z M12 13 L17 8 L7 8 Z" fill="#a8abb2"/></svg></div>
<div class="th" style="left:1131px;width:101px"><span style="position:relative;top:-1px">点击量</span><svg style="position:relative;top:-3px;margin-left:2px;flex:none" width="12" height="12" viewBox="0 0 12 12"><circle cx="6" cy="6" r="6" fill="#909399"/><text x="6" y="9.4" font-size="9.5" fill="#fff" text-anchor="middle" font-family='"Liberation Sans", sans-serif'>?</text></svg><svg style="position:relative;top:-1px;flex:none" width="24" height="14" viewBox="0 0 24 14"><path d="M12 1 L17 6 L7 6 Z M12 13 L17 8 L7 8 Z" fill="#a8abb2"/></svg></div>
<div class="th" style="left:1232px;width:121px"><span style="position:relative;top:-1px">点击率(%)</span><svg style="position:relative;top:-3px;margin-left:2px;flex:none" width="12" height="12" viewBox="0 0 12 12"><circle cx="6" cy="6" r="6" fill="#909399"/><text x="6" y="9.4" font-size="9.5" fill="#fff" text-anchor="middle" font-family='"Liberation Sans", sans-serif'>?</text></svg><svg style="position:relative;top:-1px;flex:none" width="24" height="14" viewBox="0 0 24 14"><path d="M12 1 L17 6 L7 6 Z M12 13 L17 8 L7 8 Z" fill="#a8abb2"/></svg></div>
<div class="th" style="left:1353px;width:111px"><span style="position:relative;top:-1px">CVR(%)</span><svg style="position:relative;top:-3px;margin-left:2px;flex:none" width="12" height="12" viewBox="0 0 12 12"><circle cx="6" cy="6" r="6" fill="#909399"/><text x="6" y="9.4" font-size="9.5" fill="#fff" text-anchor="middle" font-family='"Liberation Sans", sans-serif'>?</text></svg><svg style="position:relative;top:-1px;flex:none" width="24" height="14" viewBox="0 0 24 14"><path d="M12 1 L17 6 L7 6 Z M12 13 L17 8 L7 8 Z" fill="#a8abb2"/></svg></div>
<div class="th" style="left:1464px;width:101px"><span style="position:relative;top:-1px">CPC(€)</span><svg style="position:relative;top:-3px;margin-left:2px;flex:none" width="12" height="12" viewBox="0 0 12 12"><circle cx="6" cy="6" r="6" fill="#909399"/><text x="6" y="9.4" font-size="9.5" fill="#fff" text-anchor="middle" font-family='"Liberation Sans", sans-serif'>?</text></svg><svg style="position:relative;top:-1px;flex:none" width="24" height="14" viewBox="0 0 24 14"><path d="M12 1 L17 6 L7 6 Z M12 13 L17 8 L7 8 Z" fill="#a8abb2"/></svg></div>
<div class="th" style="left:1565px;width:101px"><span style="position:relative;top:-1px">CPO(€)</span><svg style="position:relative;top:-3px;margin-left:2px;flex:none" width="12" height="12" viewBox="0 0 12 12"><circle cx="6" cy="6" r="6" fill="#909399"/><text x="6" y="9.4" font-size="9.5" fill="#fff" text-anchor="middle" font-family='"Liberation Sans", sans-serif'>?</text></svg><svg style="position:relative;top:-1px;flex:none" width="24" height="14" viewBox="0 0 24 14"><path d="M12 1 L17 6 L7 6 Z M12 13 L17 8 L7 8 Z" fill="#a8abb2"/></svg></div>
</body></html>
